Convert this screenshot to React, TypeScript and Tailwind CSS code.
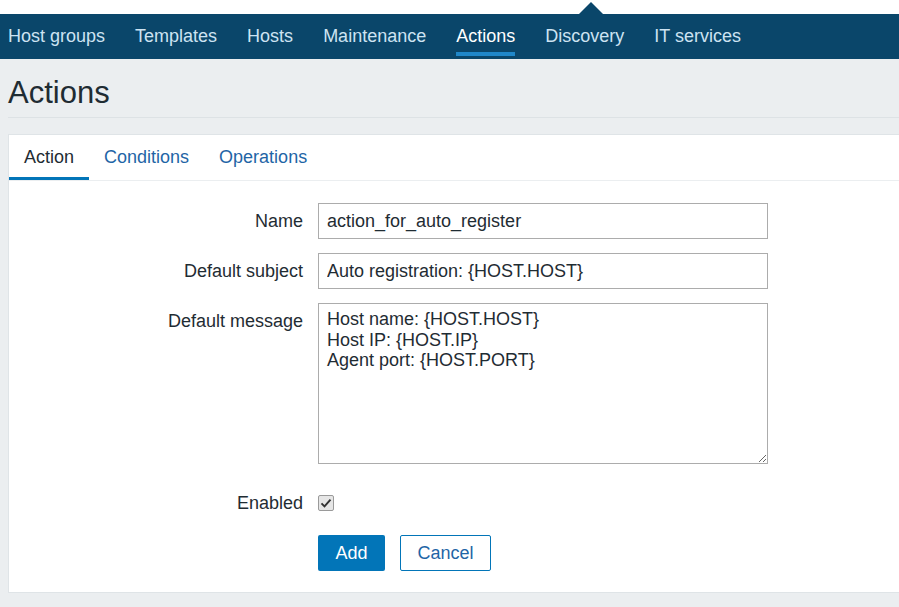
import { useState } from 'react';

const navItems = ['Host groups', 'Templates', 'Hosts', 'Maintenance', 'Actions', 'Discovery', 'IT services'];
const tabs = ['Action', 'Conditions', 'Operations'];

const messageText = 'Host name: {HOST.HOST}\nHost IP: {HOST.IP}\nAgent port: {HOST.PORT}';

const App = () => {
    const [enabled, setEnabled] = useState(true);

    return (
        <div className="w-[899px] h-[607px] overflow-hidden bg-[#ebeef0] text-[18px] text-[#1f2c33] font-['Liberation_Sans',Arial,sans-serif]">
            {/* top strip with pointer */}
            <div className="h-[14px] bg-white relative">
                <div className="absolute left-[579px] top-[2px] w-0 h-0 border-l-[12px] border-r-[12px] border-b-[12px] border-l-transparent border-r-transparent border-b-[#0a466a]" />
            </div>

            {/* main nav */}
            <nav className="h-[45px] bg-[#0a466a] flex items-stretch pl-2 pb-[2px] gap-[30px]">
                {navItems.map((item) => (
                    <div
                        key={item}
                        className={`relative flex items-center leading-none ${item === 'Actions' ? 'text-white' : 'text-[#cde3f2]'}`}
                    >
                        {item}
                        {item === 'Actions' && (
                            <span className="absolute left-0 right-0 top-[38px] h-[4px] bg-[#1f87c9]" />
                        )}
                    </div>
                ))}
            </nav>

            {/* page header */}
            <div className="ml-2 h-[59px] border-b border-[#dde2e5] flex items-center">
                <h1 className="text-[31px] leading-none text-[#1f2c33] pt-[9px]">Actions</h1>
            </div>

            {/* form card */}
            <div className="mt-4 ml-2 w-[920px] h-[459px] bg-white border border-[#dfe4e7]">
                <div className="flex h-[46px] border-b border-[#ebeef0]">
                    {tabs.map((tab, i) => (
                        <div
                            key={tab}
                            className={`px-[15px] pt-[2px] flex items-center border-b-[3px] ${i === 0 ? 'border-[#0275b8] text-[#1f2c33]' : 'border-transparent text-[#1f65a6]'}`}
                        >
                            {tab}
                        </div>
                    ))}
                </div>

                <div className="grid grid-cols-[294px_450px] gap-x-[15px] gap-y-[14px] pt-[22px]">
                    <label className="text-right leading-[36px]">Name</label>
                    <input
                        readOnly
                        defaultValue="action_for_auto_register"
                        className="h-[36px] border border-[#acacac] px-2 outline-none text-[#1f2c33]"
                    />

                    <label className="text-right leading-[36px]">Default subject</label>
                    <input
                        readOnly
                        defaultValue="Auto registration: {HOST.HOST}"
                        className="h-[36px] border border-[#acacac] px-2 outline-none text-[#1f2c33]"
                    />

                    <label className="text-right leading-[36px]">Default message</label>
                    <textarea
                        readOnly
                        defaultValue={messageText}
                        className="h-[161px] border border-[#acacac] px-2 pt-[5px] leading-[20.5px] outline-none resize text-[#1f2c33]"
                    />

                    <label className="text-right leading-[22px] mt-[14px]">Enabled</label>
                    <div className="mt-[14px] flex items-center h-[22px]">
                        <button
                            onClick={() => setEnabled(!enabled)}
                            className="w-[16px] h-[16px] rounded-[2px] border border-[#9a9a9a] bg-[#e6e6e6] flex items-center justify-center"
                        >
                            {enabled && (
                                <svg viewBox="0 0 16 16" className="w-[12px] h-[12px]">
                                    <path d="M2 8.5 L6 12.5 L14 3.5" fill="none" stroke="#333" strokeWidth="2.6" />
                                </svg>
                            )}
                        </button>
                    </div>

                    <div />
                    <div className="flex gap-[15px] mt-[7px]">
                        <button className="h-[36px] w-[67px] rounded-[2px] bg-[#0275b8] text-white">Add</button>
                        <button className="h-[36px] w-[91px] rounded-[2px] border border-[#0275b8] bg-white text-[#1f65a6]">
                            Cancel
                        </button>
                    </div>
                </div>
            </div>
        </div>
    );
};

export default App;
